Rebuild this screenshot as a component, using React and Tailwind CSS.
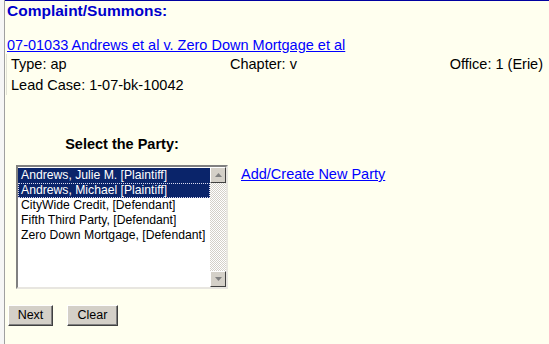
import React from "react";

const parties = [
  { name: "Andrews, Julie M. [Plaintiff]", sel: true },
  { name: "Andrews, Michael [Plaintiff]", sel: true, focus: true },
  { name: "CityWide Credit, [Defendant]" },
  { name: "Fifth Third Party, [Defendant]" },
  { name: "Zero Down Mortgage, [Defendant]" },
];

function ArrowBtn({ down }) {
  return (
    <div className="flex h-[16px] w-[16px] items-center justify-center border border-t-[#ffffff] border-l-[#ffffff] border-b-[#404040] border-r-[#404040] bg-[#d4d0c8]">
      <svg width="7" height="4" viewBox="0 0 7 4">
        {down ? (
          <polygon points="0,0 7,0 3.5,4" fill="#808080" />
        ) : (
          <polygon points="0,4 7,4 3.5,0" fill="#808080" />
        )}
      </svg>
    </div>
  );
}

function Btn({ children, w }) {
  return (
    <button
      className={`flex h-[21px] ${w} items-center justify-center border border-t-[#ffffff] border-l-[#ffffff] border-b-[#404040] border-r-[#404040] bg-[#d4d0c8] text-[12.5px] text-black shadow-[inset_-1px_-1px_0_#808080]`}
    >
      {children}
    </button>
  );
}

export default function App() {
  return (
    <div
      className="flex h-[344px] w-[549px] overflow-hidden bg-[#ffffef] text-black"
      style={{ fontFamily: '"Liberation Sans", Arial, sans-serif' }}
    >
      <div className="w-[5px] shrink-0 border-r border-[#a0a0a0] bg-[#f6f6f6]" />
      <div className="flex flex-1 flex-col">
        <div className="h-[1px] w-full bg-[#0000a0]" />
        <div className="mt-[1px] pl-[2px] text-[15.5px] font-bold leading-[18px] text-[#0000cc]">
          Complaint/Summons:
        </div>
        <div className="mt-[16px] pl-[2px] text-[14.5px] leading-[18px]">
          <a href="#" className="text-[#0000ff] underline">
            07-01033 Andrews et al v. Zero Down Mortgage et al
          </a>
        </div>
        <div className="ml-[1px] border-l border-[#e2e2d6] pb-[1px]">
          <div className="mt-[1px] grid grid-cols-[219px_1fr_auto] pl-[4px] pr-[6px] text-[14.5px] leading-[18px]">
            <span>Type: ap</span>
            <span>Chapter: v</span>
            <span>Office: 1 (Erie)</span>
          </div>
          <div className="mt-[3px] pl-[4px] text-[14.5px] leading-[18px]">
            Lead Case: 1-07-bk-10042
          </div>
        </div>
        <div className="ml-[11px] mt-[40px] flex flex-col">
          <div className="w-[212px] text-center text-[14.5px] font-bold leading-[18px]">
            Select the Party:
          </div>
          <div className="mt-[12px] flex items-start gap-[13px]">
            <div className="flex h-[124px] w-[212px] border-2 border-t-[#808080] border-l-[#808080] border-b-[#e8e6e0] border-r-[#e8e6e0] bg-white">
              <div className="flex flex-1 flex-col pt-[1px]">
                {parties.map((p) => (
                  <div
                    key={p.name}
                    className={`h-[15px] whitespace-nowrap pl-[3px] text-[12.2px] leading-[15px] ${
                      p.sel ? "bg-[#0a246a] text-white" : "text-black"
                    } ${p.focus ? "outline-1 outline-dotted outline-[#d8d8f0] -outline-offset-1" : ""}`}
                  >
                    {p.name}
                  </div>
                ))}
              </div>
              <div className="flex w-[16px] flex-col justify-between bg-[image:repeating-conic-gradient(#d4d0c8_0_25%,#ffffff_0_50%)] bg-[length:2px_2px]">
                <ArrowBtn />
                <ArrowBtn down />
              </div>
            </div>
            <a href="#" className="text-[14.5px] leading-[18px] text-[#0000ff] underline">
              Add/Create New Party
            </a>
          </div>
        </div>
        <div className="ml-[3px] mt-[16px] flex gap-[14px]">
          <Btn w="w-[45px]">Next</Btn>
          <Btn w="w-[51px]">Clear</Btn>
        </div>
      </div>
    </div>
  );
}
